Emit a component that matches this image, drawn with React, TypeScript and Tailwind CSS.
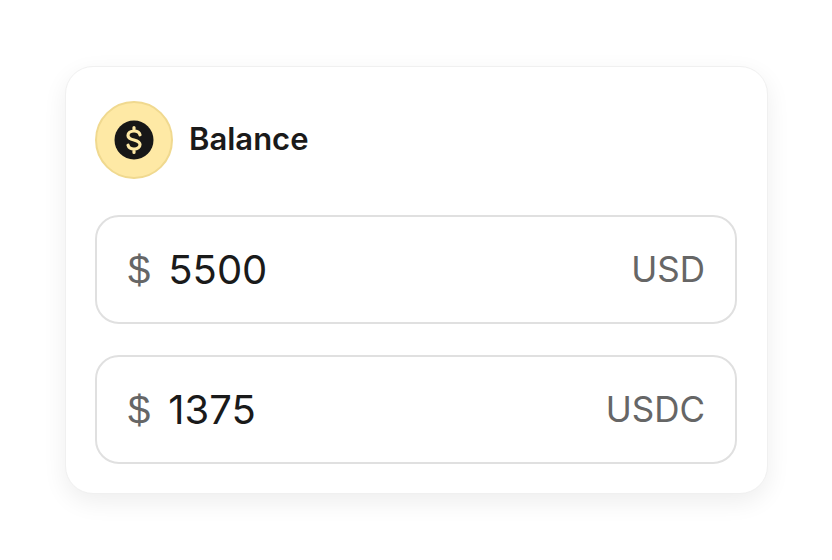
export default function App() {
  const rows = [
    { value: "5500", unit: "USD" },
    { value: "1375", unit: "USDC" },
  ];
  return (
    <div className="w-[832px] h-[560px] bg-white pl-[65px] pt-[66px] [font-family:Inter,sans-serif]">
      <div className="w-[703px] h-[428px] bg-white rounded-[28px] border border-[#f0f0f0] shadow-[0_8px_24px_rgba(0,0,0,0.07)] pl-[29px] pr-[30px] pt-[34px]">
        <div className="flex items-center gap-4">
          <div className="w-[78px] h-[78px] rounded-full bg-[#fee9a5] border-2 border-[#f0d98f] flex items-center justify-center">
            <svg width="40" height="40" viewBox="0 0 40 40">
              <circle cx="20" cy="20" r="19.5" fill="#171717" />
              <path
                d="M26 14.8C25.4 12.4 23.2 11 20 11C16.4 11 14 12.8 14 15.4C14 21.5 26 18.5 26 24.6C26 27.2 23.6 29 20 29C16.8 29 14.6 27.6 14 25.2M20 7.5V11M20 29V32.5"
                fill="none"
                stroke="#fee9a5"
                strokeWidth="3.2"
                strokeLinecap="round"
                strokeLinejoin="round"
              />
            </svg>
          </div>
          <span className="text-[31px] font-semibold text-[#1a1a1a] leading-none -mt-1">Balance</span>
        </div>
        <div className="mt-[36px] flex flex-col gap-[31px]">
          {rows.map((r) => (
            <div
              key={r.unit}
              className="h-[109px] rounded-[24px] border-2 border-[#e0e0e0] flex items-center justify-between pl-[31px] pr-[30px]"
            >
              <div className="flex items-center gap-[18px]">
                <span className="text-[40px] text-[#666666] leading-none [font-family:'Liberation_Sans',sans-serif]">$</span>
                <span className="text-[40px] text-[#1a1a1a] leading-none">{r.value}</span>
              </div>
              <span className="text-[35px] text-[#666666] leading-none">{r.unit}</span>
            </div>
          ))}
        </div>
      </div>
    </div>
  );
}
